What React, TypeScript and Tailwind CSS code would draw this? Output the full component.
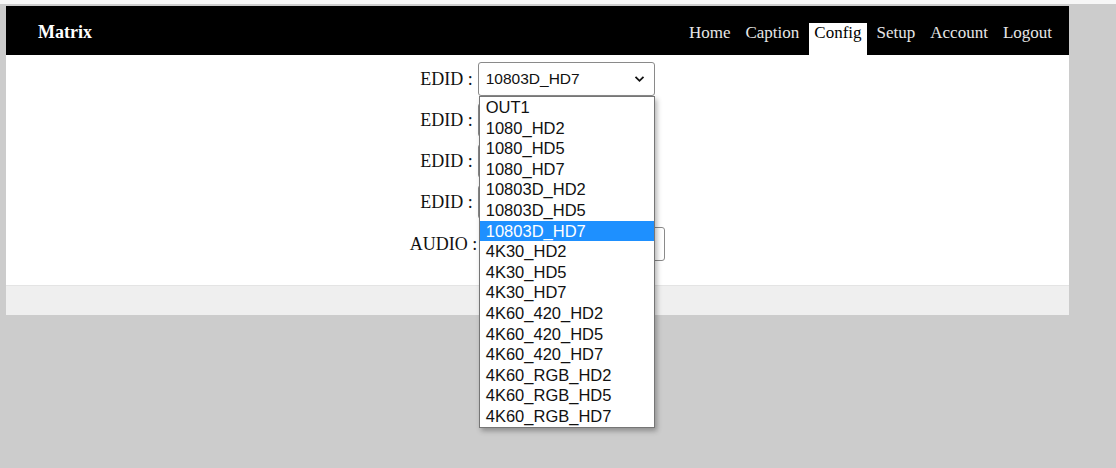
import React from "react";

const options = [
  "OUT1",
  "1080_HD2",
  "1080_HD5",
  "1080_HD7",
  "10803D_HD2",
  "10803D_HD5",
  "10803D_HD7",
  "4K30_HD2",
  "4K30_HD5",
  "4K30_HD7",
  "4K60_420_HD2",
  "4K60_420_HD5",
  "4K60_420_HD7",
  "4K60_RGB_HD2",
  "4K60_RGB_HD5",
  "4K60_RGB_HD7",
];

function Chevron() {
  return (
    <svg width="11" height="8" viewBox="0 0 11 8" className="shrink-0">
      <path d="M1.5 1.8 L5.5 5.8 L9.5 1.8" fill="none" stroke="#111" strokeWidth="1.8" />
    </svg>
  );
}

function FakeSelect({ value, width, open }: { value: string; width: string; open?: boolean }) {
  return (
    <span className={`relative inline-flex align-middle ${width}`}>
      <span className="flex h-[34px] w-full items-center justify-between rounded-[3px] border border-[#8a8a8a] bg-white pl-[7px] pr-[9px] text-[15.5px] text-[#111] [font-family:Arial,'Liberation_Sans',sans-serif]">
        <span>{value}</span>
        <Chevron />
      </span>
      {open && (
        <div className="absolute left-[1px] top-[34px] z-10 w-[176px] border border-[#767676] bg-white text-left shadow-[2px_3px_5px_rgba(0,0,0,0.3)] [font-family:Arial,'Liberation_Sans',sans-serif]">
          {options.map((o) => (
            <div
              key={o}
              className={`h-[20.6px] pl-[6px] text-[16.5px] leading-[20.6px] ${
                o === "10803D_HD7" ? "bg-[#1e90ff] text-white" : "text-[#111]"
              }`}
            >
              {o}
            </div>
          ))}
        </div>
      )}
    </span>
  );
}

function Row({ label, width, open, value }: { label: string; width: string; open?: boolean; value: string }) {
  return (
    <div className={`text-[18px] text-[#111] ${open ? "relative z-20" : ""}`}>
      <span className="mr-[5px] align-middle">{label}</span>
      <FakeSelect value={value} width={width} open={open} />
    </div>
  );
}

export default function App() {
  const nav = ["Home", "Caption", "Config", "Setup", "Account", "Logout"];
  return (
    <div className="h-[468px] w-[1116px] overflow-hidden bg-[#cccccc] [font-family:'Liberation_Serif','Times_New_Roman',serif]">
      <div className="h-[4px] bg-[#f7f7f7]" />
      <div className="pl-[6px] pt-[2px]">
        <div className="w-[1063px]">
          <div className="flex h-[49px] items-end justify-between bg-black pr-[12px]">
            <div className="self-center pl-[32px] pt-[4px] text-[18px] font-bold text-white">Matrix</div>
            <div className="flex h-[32px] items-stretch gap-[5px]">
              {nav.map((n) => (
                <div
                  key={n}
                  className={`px-[5px] pt-0 text-[17px] leading-[20px] ${
                    n === "Config" ? "bg-white text-black" : "text-[#e6e6e6]"
                  }`}
                >
                  {n}
                </div>
              ))}
            </div>
          </div>
          <div className="bg-white pb-[24px] pt-[7px] text-center">
            <div className="flex flex-col items-center gap-[7px]">
              <Row label="EDID :" value="10803D_HD7" width="w-[177px]" open />
              <Row label="EDID :" value="10803D_HD7" width="w-[177px]" />
              <Row label="EDID :" value="10803D_HD7" width="w-[177px]" />
              <Row label="EDID :" value="10803D_HD7" width="w-[177px]" />
              <div className="pt-[1px]">
                <Row label="AUDIO :" value="HDMI" width="w-[183px]" />
              </div>
            </div>
          </div>
          <div className="h-[30px] border-t border-[#e4e4e4] bg-[#efefef]" />
        </div>
      </div>
    </div>
  );
}
